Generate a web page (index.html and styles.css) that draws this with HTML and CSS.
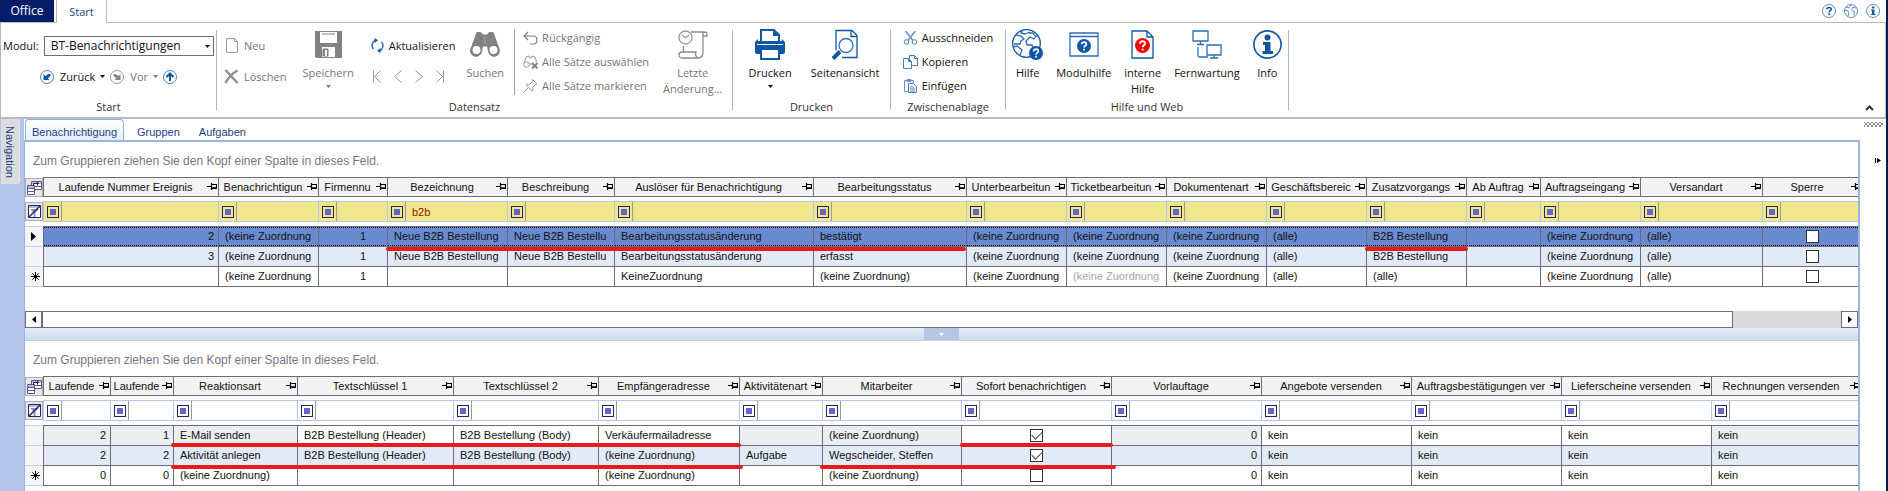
FILE: index.html
```html
<!DOCTYPE html>
<html lang="de">
<head>
  <meta charset="UTF-8">
  <meta name="viewport" content="width=device-width, initial-scale=1.0">
  <title>BT-Benachrichtigungen</title>
  <link rel="stylesheet" href="styles.css">
</head>
<body>
  <!-- shared icons -->
  <svg class="sprite" aria-hidden="true">
    <symbol id="pin" viewBox="0 0 10 7"><path d="M0 3.500h4M4.500 0v7M5 1.500h4.500v4H5M5 4.800h4" fill="none" stroke="#000" stroke-width="1.200"/></symbol>
    <symbol id="caret" viewBox="0 0 5 3"><path d="M0 0h5L2.500 3z" fill="currentColor"/></symbol>
    <symbol id="star" viewBox="0 0 9 9"><path d="M4.500 0v9M0 4.500h9M1.300 1.300l6.400 6.400M7.700 1.300L1.300 7.700" stroke="#000" fill="none"/></symbol>
    <symbol id="chooser" viewBox="0 0 15 15">
      <path d="M4.500 1.500h10v8h-10z" fill="#fff" stroke="#5a5a8c"/>
      <path d="M5 2h9v2H5z" fill="#b9b9e0"/>
      <path d="M.500 5.500h7v9h-7z" fill="#fff" stroke="#5a5a8c"/>
      <path d="M1 6h6v2H1z" fill="#b9b9e0"/>
      <path d="M1 8.500h6M1 11.500h6M8 6.500h6" stroke="#5a5a8c"/>
      <path d="M6.500 6V3.500H12M10.500 1.500v4" fill="none" stroke="#26265a"/>
    </symbol>
    <symbol id="nofilter" viewBox="0 0 13 13">
      <path d="M.500.500h12v12H.500z" fill="#fff" stroke="#26265a"/>
      <path d="M1 1h11v2H1z" fill="#b9b9e0"/>
      <path d="M2 4h9L7.500 7.500V12h-2V7.500z" fill="#8b8bd0"/>
      <path d="M1 12L12 1" stroke="#26265a" stroke-width="1.500"/>
    </symbol>
    <symbol id="question" viewBox="0 0 12 12">
      <circle cx="6" cy="6" r="6" fill="currentColor"/>
      <path d="M4 4.600C4 3.200 4.900 2.600 6 2.600s2 .700 2 1.800c0 1.300-1.900 1.500-1.900 2.900M6.100 8.400v1.500" fill="none" stroke="#fff" stroke-width="1.500"/>
    </symbol>
  </svg>

  <header>
    <div class="tab-bar">
      <button class="tab office">Office</button>
      <button class="tab active">Start</button>
      <div class="quick">
        <button aria-label="Hilfe"><svg width="14" height="14" viewBox="0 0 14 14"><circle cx="7" cy="7" r="6.500" fill="#fff" stroke="#5b8fc7"/><path d="M4.800 5.300C4.800 4 5.800 3.500 7 3.500s2.200.600 2.200 1.800C9.200 6.700 7.100 6.700 7.100 8.400M7.100 9.300v1.700" fill="none" stroke="#0f57a5" stroke-width="1.700"/></svg></button>
        <button aria-label="Web"><svg width="14" height="14" viewBox="0 0 14 14"><circle cx="7" cy="7" r="6.500" fill="#fff" stroke="#5b8fc7"/><path d="M1 6l3 1 1 2-1 3M2 3l3 1 2-3M12 4L9 3 7.500 5.500 9 7.500l1.500 0-.500 4" fill="none" stroke="#5b8fc7"/></svg></button>
        <button aria-label="Info"><svg width="14" height="14" viewBox="0 0 14 14"><circle cx="7" cy="7" r="6.500" fill="#fff" stroke="#5b8fc7"/><path d="M6 2.500h2.500v2H6zM5 5.500h3.500v4.500H9.500v1H4.800v-1H6V6.500H5z" fill="#0f57a5"/></svg></button>
      </div>
    </div>

    <div class="ribbon">
      <section class="group group-start">
        <div class="group-body">
          <div class="pair">
            <div class="row">
              <label for="modul">Modul:</label>
              <div class="select-box">
                <select id="modul"><option>BT-Benachrichtigungen</option></select>
                <svg class="caret"><use href="#caret"/></svg>
              </div>
            </div>
            <div class="row history">
              <button><svg width="14" height="14" viewBox="0 0 14 14"><circle cx="7" cy="7" r="6.500" fill="#fff" stroke="#4a7fbd"/><path d="M3.500 4v6h6L7.800 8.300 10.500 6V4H8.500L5.500 6z" fill="#0f57a5"/></svg>Zurück</button>
              <svg class="caret"><use href="#caret"/></svg>
              <button class="off"><svg width="14" height="14" viewBox="0 0 14 14"><circle cx="7" cy="7" r="6.500" fill="#fff" stroke="#999"/><path d="M10.500 4v6h-6l1.700-1.700L3.500 6V4h2l3 2z" fill="#858585"/></svg>Vor</button>
              <svg class="caret off"><use href="#caret"/></svg>
              <button aria-label="Nach oben"><svg width="14" height="14" viewBox="0 0 14 14"><circle cx="7" cy="7" r="6.500" fill="#fff" stroke="#4a7fbd"/><path d="M7 3v8M3.500 7L7 3.500 10.500 7" fill="none" stroke="#0f57a5" stroke-width="2"/></svg></button>
            </div>
          </div>
        </div>
        <h2>Start</h2>
      </section>
      <div class="sep"></div>

      <section class="group group-data">
        <div class="group-body">
          <div class="pair">
            <button class="row off"><svg width="15" height="15" viewBox="0 0 15 15"><path d="M2.500.500h8l3 3v11h-11zM10.500.500v3h3" fill="#fff" stroke="#999"/></svg>Neu</button>
            <button class="row off"><svg width="15" height="15" viewBox="0 0 15 15"><path d="M1.500 1L13.500 14M13.500 1.500C9 4 4 9 1.500 14" fill="none" stroke="#8c8c8c" stroke-width="2.400"/></svg>Löschen</button>
          </div>
          <button class="big save off">
            <svg class="ico" width="27" height="27" viewBox="0 0 27 27"><path d="M0 0h27v27H1.500L0 25.500z" fill="#828282"/><path d="M5 1h17v11H5zM7 16h13v10H7z" fill="#fff"/><path d="M7 3h13M8 18h5v7H8z" fill="#828282" stroke="#828282"/><path d="M10 19h2v6h-2z" fill="#fff"/></svg>
            <span>Speichern</span>
            <svg class="caret"><use href="#caret"/></svg>
          </button>
          <div class="pair refresh">
            <button class="row"><svg width="13" height="15" viewBox="0 0 13 15"><path d="M4.500 2.200A5.500 5.500 0 0 0 2.500 11M8.500 12.800A5.500 5.500 0 0 0 10.500 4" fill="none" stroke="#2d6db3" stroke-width="1.500"/><path d="M3.500 0v5L7 2.200zM9.500 15v-5L6 12.800z" fill="#0f57a5"/></svg>Aktualisieren</button>
            <div class="row steps off">
              <button aria-label="Erster"><svg width="8" height="13" viewBox="0 0 8 13"><path d="M.500.500v12M7.500.500l-6 6 6 6" fill="none" stroke="#999"/></svg></button>
              <button aria-label="Zurück"><svg width="8" height="13" viewBox="0 0 8 13"><path d="M7.500.500l-7 6 7 6" fill="none" stroke="#999"/></svg></button>
              <button aria-label="Weiter"><svg width="8" height="13" viewBox="0 0 8 13"><path d="M.500.500l7 6-7 6" fill="none" stroke="#999"/></svg></button>
              <button aria-label="Letzter"><svg width="8" height="13" viewBox="0 0 8 13"><path d="M7.500.500v12M.500.500l6 6-6 6" fill="none" stroke="#999"/></svg></button>
            </div>
          </div>
          <button class="big search off">
            <svg class="ico" width="30" height="26" viewBox="0 0 30 26"><path d="M6 2c0-2 6-2 6 0l1 1h4l1-1c0-2 6-2 6 0l5 14a6 6 0 1 1-11 4l-1-5h-4l-1 5A6 6 0 1 1 1 16z" fill="#828282"/><circle cx="6.500" cy="18.500" r="4" fill="#fff"/><circle cx="23.500" cy="18.500" r="4" fill="#fff"/><path d="M15 5v7" stroke="#aaa"/></svg>
            <span>Suchen</span>
          </button>
          <div class="sep inner"></div>
          <div class="list">
            <button class="row off"><svg width="15" height="14" viewBox="0 0 15 14"><path d="M5 1L1 5l4 4M1 5h9.500c4.500 0 4.500 8 0 8H7" fill="none" stroke="#808080" stroke-width="1.200"/></svg>Rückgängig</button>
            <button class="row off"><svg width="15" height="14" viewBox="0 0 15 14"><path d="M1 9l2-7 3-1 1 2h1l1-2 3 1 1.500 5M6 9h3" fill="none" stroke="#999"/><circle cx="3.500" cy="9.500" r="2.800" fill="#fff" stroke="#999"/><path d="M9 8l5.500 5.500M14.500 8L9 13.500" stroke="#858585" stroke-width="2"/></svg>Alle Sätze auswählen</button>
            <button class="row off"><svg width="15" height="14" viewBox="0 0 15 14"><path d="M9.500.500l4.500 4.500-1.500.500-3 3 .500 2.500-1 1-6-6 1-1 2.500.500 3-3zM5.500 8.500L.500 13.500" fill="#fff" stroke="#999"/></svg>Alle Sätze markieren</button>
          </div>
          <button class="big off">
            <svg class="ico" width="30" height="29" viewBox="0 0 30 29"><path d="M13 2h12c4 0 4 0 4 4h-4M25 2v20c0 5-3 6-5 6H4c-4 0-4-6 0-6h14c-1 3 0 5 2 6M5.500 16v6" fill="none" stroke="#8c8c8c" stroke-width="1.300"/><circle cx="7.500" cy="7.500" r="6.500" fill="#fff" stroke="#999" stroke-width="1.300"/><path d="M4 5l3.500 3 3.500-3" fill="none" stroke="#999" stroke-width="1.200"/></svg>
            <span>Letzte<br>Änderung...</span>
          </button>
        </div>
        <h2>Datensatz</h2>
      </section>
      <div class="sep"></div>

      <section class="group group-print">
        <div class="group-body">
          <button class="big">
            <svg class="ico" width="30" height="31" viewBox="0 0 30 31"><path d="M6 12V1h13l5 5v6" fill="#fff" stroke="#0f57a5" stroke-width="2"/><path d="M18 1v6h6" fill="#0f57a5"/><path d="M3 10v2h24v-2l3 3v5H0v-5zM0 17h30v6a2 2 0 0 1-2 2H2a2 2 0 0 1-2-2z" fill="#0f57a5"/><path d="M2 15.500h26" stroke="#fff"/><path d="M6 20h18v10H6z" fill="#fff" stroke="#0f57a5" stroke-width="2"/></svg>
            <span>Drucken</span>
            <svg class="caret"><use href="#caret"/></svg>
          </button>
          <button class="big">
            <svg class="ico" width="26" height="30" viewBox="0 0 26 30"><path d="M4 21V1h16l5 5v22H10" fill="#fff" stroke="#0f57a5" stroke-width="1.300"/><path d="M19 1v6h6" fill="none" stroke="#0f57a5" stroke-width="1.300"/><circle cx="14" cy="16" r="7" fill="#fff" stroke="#2d6db3" stroke-width="1.300"/><path d="M1 29l7-7" stroke="#0f57a5" stroke-width="4"/></svg>
            <span>Seitenansicht</span>
          </button>
        </div>
        <h2>Drucken</h2>
      </section>
      <div class="sep"></div>

      <section class="group group-clip">
        <div class="group-body">
          <div class="list">
            <button class="row"><svg width="15" height="14" viewBox="0 0 15 14"><path d="M2.500 0l7.500 9.500M12.500 0L5 9.500" fill="none" stroke="#6a96c8" stroke-width="1.600"/><circle cx="3.500" cy="11" r="2.300" fill="#fff" stroke="#4a7fbd"/><circle cx="11.500" cy="11" r="2.300" fill="#fff" stroke="#4a7fbd"/></svg>Ausschneiden</button>
            <button class="row"><svg width="15" height="14" viewBox="0 0 15 14"><path d="M6.500.500h5l3 3v7h-8zM11.500.500v3h3" fill="#fff" stroke="#4a7fbd"/><path d="M.500 3.500h5l3 3v7h-8zM5.500 3.500v3h3" fill="#fff" stroke="#4a7fbd"/></svg>Kopieren</button>
            <button class="row"><svg width="15" height="14" viewBox="0 0 15 14"><path d="M1.500 1.500h9v11h-9zM4 .500h4v2H4z" fill="#fff" stroke="#6a96c8"/><path d="M5.500 4.500h5l3 3v6h-8zM7 8h4M7 10h5M7 12h5" fill="#fff" stroke="#4a7fbd"/></svg>Einfügen</button>
          </div>
        </div>
        <h2>Zwischenablage</h2>
      </section>
      <div class="sep"></div>

      <section class="group group-help">
        <div class="group-body">
          <button class="big">
            <svg class="ico" width="31" height="31" viewBox="0 0 31 31"><circle cx="14.500" cy="14.500" r="13.800" fill="#fff" stroke="#0f57a5" stroke-width="1.300"/><path d="M4 6l5 1 3 3-3 2-1 3-6 0M1 18l4-1 5 4-2 5M11 1L9 4l4 1 5-2M27 8l-3-1-2 3-4-2-4 4 1 4 5 0 1 3M17 4l4 0 2 3" fill="none" stroke="#2d6db3" stroke-width="1.300"/><circle cx="24" cy="24" r="7" fill="#0f57a5"/><path d="M21.700 22.500c0-1.600 1-2.400 2.300-2.400s2.300.900 2.300 2.100c0 1.500-2.200 1.700-2.200 3.300M24.100 26.800v1.700" fill="none" stroke="#fff" stroke-width="1.700"/></svg>
            <span>Hilfe</span>
          </button>
          <button class="big">
            <svg class="ico" width="30" height="29" viewBox="0 0 30 29"><path d="M1 3h28v23H1zM1 6.500h28" fill="#fff" stroke="#2d6db3" stroke-width="1.300"/><svg class="blue" x="8" y="9" width="14" height="14"><use href="#question"/></svg></svg>
            <span>Modulhilfe</span>
          </button>
          <button class="big">
            <svg class="ico" width="23" height="29" viewBox="0 0 23 29"><path d="M1 1h15l6 6v21H1zM16 1v6h6" fill="#fff" stroke="#0f57a5" stroke-width="1.300"/><svg class="red" x="4" y="8" width="15" height="15"><use href="#question"/></svg></svg>
            <span>interne<br>Hilfe</span>
          </button>
          <button class="big">
            <svg class="ico" width="30" height="29" viewBox="0 0 30 29"><path d="M1 1h15v10H1zM15 15h14v10H15zM8.500 11v3M5 14.500h7M22 25v3M18 28h8M6 17v8c0 2 1 2 2 2h8" fill="none" stroke="#2d6db3" stroke-width="1.300"/></svg>
            <span>Fernwartung</span>
          </button>
          <button class="big">
            <svg class="ico" width="29" height="29" viewBox="0 0 29 29"><circle cx="14.500" cy="14.500" r="13.600" fill="#fff" stroke="#0f57a5" stroke-width="1.600"/><circle cx="14.500" cy="7.500" r="3" fill="#0f57a5"/><path d="M10 12h7.500v9H20v3H9.500v-3H12v-6h-2z" fill="#0f57a5"/></svg>
            <span>Info</span>
          </button>
        </div>
        <h2>Hilfe und Web</h2>
      </section>
      <div class="sep"></div>
      <button class="collapse" aria-label="Menüband minimieren"><svg width="9" height="6" viewBox="0 0 9 6"><path d="M1 5l3.500-3.500L8 5" fill="none" stroke="#333" stroke-width="2"/></svg></button>
    </div>
  </header>

  <div class="workspace">
    <aside class="nav-strip"><button>Navigation</button></aside>

    <main>
      <nav class="sheets">
        <a href="#" class="active">Benachrichtigung</a>
        <a href="#">Gruppen</a>
        <a href="#">Aufgaben</a>
      </nav>

      <div class="panel">
        <div class="grid grid-top">
          <p class="group-hint">Zum Gruppieren ziehen Sie den Kopf einer Spalte in dieses Feld.</p>
          <div class="sheet">
            <table>
              <colgroup>
                <col class="w18"><col class="w175"><col class="w100"><col class="w69"><col class="w120"><col class="w107"><col class="w199"><col class="w153"><col class="w100"><col class="w100"><col class="w100"><col class="w100"><col class="w100"><col class="w74"><col class="w100"><col class="w122"><col class="w100">
              </colgroup>
              <thead>
                <tr class="head">
                  <td class="corner"><button aria-label="Feldauswahl"><svg width="15" height="15"><use href="#chooser"/></svg></button></td>
                  <th>Laufende Nummer Ereignis<svg class="pin"><use href="#pin"/></svg></th>
                  <th>Benachrichtigun<svg class="pin"><use href="#pin"/></svg></th>
                  <th>Firmennu<svg class="pin"><use href="#pin"/></svg></th>
                  <th>Bezeichnung<svg class="pin"><use href="#pin"/></svg></th>
                  <th>Beschreibung<svg class="pin"><use href="#pin"/></svg></th>
                  <th>Auslöser für Benachrichtigung<svg class="pin"><use href="#pin"/></svg></th>
                  <th>Bearbeitungsstatus<svg class="pin"><use href="#pin"/></svg></th>
                  <th>Unterbearbeitun<svg class="pin"><use href="#pin"/></svg></th>
                  <th>Ticketbearbeitun<svg class="pin"><use href="#pin"/></svg></th>
                  <th>Dokumentenart<svg class="pin"><use href="#pin"/></svg></th>
                  <th>Geschäftsbereic<svg class="pin"><use href="#pin"/></svg></th>
                  <th>Zusatzvorgangs<svg class="pin"><use href="#pin"/></svg></th>
                  <th>Ab Auftrag<svg class="pin"><use href="#pin"/></svg></th>
                  <th>Auftragseingang<svg class="pin"><use href="#pin"/></svg></th>
                  <th>Versandart<svg class="pin"><use href="#pin"/></svg></th>
                  <th>Sperre<svg class="pin"><use href="#pin"/></svg></th>
                </tr>
                <tr class="gap"><td colspan="17"></td></tr>
                <tr class="filter active">
                  <td class="corner"><button aria-label="Filter löschen"><svg width="13" height="13"><use href="#nofilter"/></svg></button></td>
                  <td><div><button aria-label="Operator"></button><input aria-label="Laufende Nummer Ereignis"></div></td>
                  <td><div><button aria-label="Operator"></button><input aria-label="Benachrichtigung"></div></td>
                  <td><div><button aria-label="Operator"></button><input aria-label="Firmennummer"></div></td>
                  <td><div><button aria-label="Operator"></button><input aria-label="Bezeichnung" value="b2b"></div></td>
                  <td><div><button aria-label="Operator"></button><input aria-label="Beschreibung"></div></td>
                  <td><div><button aria-label="Operator"></button><input aria-label="Auslöser"></div></td>
                  <td><div><button aria-label="Operator"></button><input aria-label="Bearbeitungsstatus"></div></td>
                  <td><div><button aria-label="Operator"></button><input aria-label="Unterbearbeitung"></div></td>
                  <td><div><button aria-label="Operator"></button><input aria-label="Ticketbearbeitung"></div></td>
                  <td><div><button aria-label="Operator"></button><input aria-label="Dokumentenart"></div></td>
                  <td><div><button aria-label="Operator"></button><input aria-label="Geschäftsbereich"></div></td>
                  <td><div><button aria-label="Operator"></button><input aria-label="Zusatzvorgang"></div></td>
                  <td><div><button aria-label="Operator"></button><input aria-label="Ab Auftrag"></div></td>
                  <td><div><button aria-label="Operator"></button><input aria-label="Auftragseingang"></div></td>
                  <td><div><button aria-label="Operator"></button><input aria-label="Versandart"></div></td>
                  <td><div><button aria-label="Operator"></button><input aria-label="Sperre"></div></td>
                </tr>
                <tr class="gap"><td colspan="17"></td></tr>
              </thead>
              <tbody>
                <tr class="selected">
                  <td class="marker"><svg width="5" height="9" viewBox="0 0 5 9"><path d="M0 0l5 4.500L0 9z"/></svg></td>
                  <td class="num">2</td><td>(keine Zuordnung</td><td class="num firm">1</td><td>Neue B2B Bestellung</td><td>Neue B2B Bestellu</td><td>Bearbeitungsstatusänderung</td><td>bestätigt</td><td>(keine Zuordnung</td><td>(keine Zuordnung</td><td>(keine Zuordnung</td><td>(alle)</td><td>B2B Bestellung</td><td></td><td>(keine Zuordnung</td><td>(alle)</td><td class="check"><input type="checkbox" aria-label="Sperre"></td>
                </tr>
                <tr class="alt">
                  <td class="marker"></td>
                  <td class="num">3</td><td>(keine Zuordnung</td><td class="num firm">1</td><td>Neue B2B Bestellung</td><td>Neue B2B Bestellu</td><td>Bearbeitungsstatusänderung</td><td>erfasst</td><td>(keine Zuordnung</td><td>(keine Zuordnung</td><td>(keine Zuordnung</td><td>(alle)</td><td>B2B Bestellung</td><td></td><td>(keine Zuordnung</td><td>(alle)</td><td class="check"><input type="checkbox" aria-label="Sperre"></td>
                </tr>
                <tr>
                  <td class="marker"><svg width="9" height="9"><use href="#star"/></svg></td>
                  <td class="num"></td><td>(keine Zuordnung</td><td class="num firm">1</td><td></td><td></td><td>KeineZuordnung</td><td>(keine Zuordnung)</td><td>(keine Zuordnung</td><td class="dim">(keine Zuordnung</td><td>(keine Zuordnung</td><td>(alle)</td><td>(alle)</td><td></td><td>(keine Zuordnung</td><td>(alle)</td><td class="check"><input type="checkbox" aria-label="Sperre"></td>
                </tr>
              </tbody>
            </table>
            <i class="mark mark-name"></i>
            <i class="mark mark-process"></i>
          </div>
          <div class="scrollbar">
            <button aria-label="Nach links"><svg width="4" height="7" viewBox="0 0 4 7"><path d="M4 0v7L0 3.500z"/></svg></button>
            <div class="track"><div class="thumb"></div></div>
            <button aria-label="Nach rechts"><svg width="4" height="7" viewBox="0 0 4 7"><path d="M0 0v7l4-3.500z"/></svg></button>
          </div>
        </div>

        <div class="splitter"><button aria-label="Bereich einklappen"><svg class="caret"><use href="#caret"/></svg></button></div>

        <div class="grid">
          <p class="group-hint">Zum Gruppieren ziehen Sie den Kopf einer Spalte in dieses Feld.</p>
          <div class="sheet">
            <table>
              <colgroup>
                <col class="w18"><col class="w67"><col class="w63"><col class="w124"><col class="w156"><col class="w145"><col class="w141"><col class="w83"><col class="w139"><col class="w150"><col class="w150"><col class="w150"><col class="w150"><col class="w150"><col class="w150">
              </colgroup>
              <thead>
                <tr class="head">
                  <td class="corner"><button aria-label="Feldauswahl"><svg width="15" height="15"><use href="#chooser"/></svg></button></td>
                  <th>Laufende<svg class="pin"><use href="#pin"/></svg></th>
                  <th>Laufende<svg class="pin"><use href="#pin"/></svg></th>
                  <th>Reaktionsart<svg class="pin"><use href="#pin"/></svg></th>
                  <th>Textschlüssel 1<svg class="pin"><use href="#pin"/></svg></th>
                  <th>Textschlüssel 2<svg class="pin"><use href="#pin"/></svg></th>
                  <th>Empfängeradresse<svg class="pin"><use href="#pin"/></svg></th>
                  <th>Aktivitätenart<svg class="pin"><use href="#pin"/></svg></th>
                  <th>Mitarbeiter<svg class="pin"><use href="#pin"/></svg></th>
                  <th>Sofort benachrichtigen<svg class="pin"><use href="#pin"/></svg></th>
                  <th>Vorlauftage<svg class="pin"><use href="#pin"/></svg></th>
                  <th>Angebote versenden<svg class="pin"><use href="#pin"/></svg></th>
                  <th>Auftragsbestätigungen ver<svg class="pin"><use href="#pin"/></svg></th>
                  <th>Lieferscheine versenden<svg class="pin"><use href="#pin"/></svg></th>
                  <th>Rechnungen versenden<svg class="pin"><use href="#pin"/></svg></th>
                </tr>
                <tr class="gap"><td colspan="15"></td></tr>
                <tr class="filter">
                  <td class="corner"><button aria-label="Filter löschen"><svg width="13" height="13"><use href="#nofilter"/></svg></button></td>
                  <td><div><button aria-label="Operator"></button><input aria-label="Laufende Nummer Ereignis"></div></td>
                  <td><div><button aria-label="Operator"></button><input aria-label="Laufende Nummer"></div></td>
                  <td><div><button aria-label="Operator"></button><input aria-label="Reaktionsart"></div></td>
                  <td><div><button aria-label="Operator"></button><input aria-label="Textschlüssel 1"></div></td>
                  <td><div><button aria-label="Operator"></button><input aria-label="Textschlüssel 2"></div></td>
                  <td><div><button aria-label="Operator"></button><input aria-label="Empfängeradresse"></div></td>
                  <td><div><button aria-label="Operator"></button><input aria-label="Aktivitätenart"></div></td>
                  <td><div><button aria-label="Operator"></button><input aria-label="Mitarbeiter"></div></td>
                  <td><div><button aria-label="Operator"></button><input aria-label="Sofort benachrichtigen"></div></td>
                  <td><div><button aria-label="Operator"></button><input aria-label="Vorlauftage"></div></td>
                  <td><div><button aria-label="Operator"></button><input aria-label="Angebote versenden"></div></td>
                  <td><div><button aria-label="Operator"></button><input aria-label="Auftragsbestätigungen versenden"></div></td>
                  <td><div><button aria-label="Operator"></button><input aria-label="Lieferscheine versenden"></div></td>
                  <td><div><button aria-label="Operator"></button><input aria-label="Rechnungen versenden"></div></td>
                </tr>
                <tr class="gap"><td colspan="15"></td></tr>
              </thead>
              <tbody>
                <tr>
                  <td class="marker"></td>
                  <td class="num locked">2</td><td class="num locked">1</td><td class="locked">E-Mail senden</td><td>B2B Bestellung (Header)</td><td>B2B Bestellung (Body)</td><td>Verkäufermailadresse</td><td class="locked"></td><td class="locked">(keine Zuordnung)</td><td class="check"><input type="checkbox" aria-label="Sofort benachrichtigen" checked></td><td class="num locked">0</td><td>kein</td><td>kein</td><td>kein</td><td class="locked">kein</td>
                </tr>
                <tr class="alt">
                  <td class="marker"></td>
                  <td class="num">2</td><td class="num">2</td><td>Aktivität anlegen</td><td>B2B Bestellung (Header)</td><td>B2B Bestellung (Body)</td><td>(keine Zuordnung)</td><td>Aufgabe</td><td>Wegscheider, Steffen</td><td class="check"><input type="checkbox" aria-label="Sofort benachrichtigen" checked></td><td class="num">0</td><td>kein</td><td>kein</td><td>kein</td><td>kein</td>
                </tr>
                <tr>
                  <td class="marker"><svg width="9" height="9"><use href="#star"/></svg></td>
                  <td class="num">0</td><td class="num">0</td><td>(keine Zuordnung)</td><td></td><td></td><td>(keine Zuordnung)</td><td></td><td>(keine Zuordnung)</td><td class="check"><input type="checkbox" aria-label="Sofort benachrichtigen"></td><td class="num">0</td><td>kein</td><td>kein</td><td>kein</td><td>kein</td>
                </tr>
              </tbody>
            </table>
            <i class="mark mark-mail"></i>
            <i class="mark mark-instant"></i>
            <i class="mark mark-task"></i>
            <i class="mark mark-staff"></i>
          </div>
        </div>
      </div>
    </main>

    <aside class="rail">
      <div class="grip"></div>
      <button aria-label="Ausklappen"><svg width="6" height="5" viewBox="0 0 6 5"><path d="M0 0h1v5H0zM2 0l4 2.500L2 5z"/></svg></button>
    </aside>
  </div>
</body>
</html>
```
FILE: styles.css
```css
* {
  box-sizing: border-box;
  margin: 0;
  padding: 0;
}
body {
  display: flex;
  flex-direction: column;
  min-height: 100vh;
  background-color: #fff;
  border-right: 2px solid #0b1c50;
  font-family: "Open Sans", "Noto Sans", sans-serif;
  font-size: 11px;
  line-height: 16px;
  color: #111;
  overflow: hidden;
}
button, select, input {
  font: inherit;
  color: inherit;
  background: none;
  border: none;
}
svg {
  display: block;
  flex: none;
}
.sprite {
  position: absolute;
  width: 0;
  height: 0;
}
.caret {
  width: 5px;
  height: 3px;
}
.off {
  color: #757575;
}

/* tab bar */
.tab-bar {
  display: flex;
  height: 23px;
  border-bottom: 1px solid #b9b9c0;
}
.tab {
  width: 51px;
  color: #1e3f80;
}
.tab.office {
  width: 54px;
  margin-right: 2px;
  background-color: #061c69;
  color: #fff;
  font-size: 12px;
}
.tab.active {
  height: 23px;
  border: solid #b9b9c0;
  border-width: 0 1px;
  background-color: #fff;
}
.quick {
  display: flex;
  align-items: center;
  gap: 8px;
  margin-left: auto;
  padding-right: 6px;
}

/* ribbon */
.ribbon {
  display: flex;
  border: solid #b9b9c0;
  border-width: 0 1px 2px;
  height: 96px;
}
.group {
  display: flex;
  flex-direction: column;
  padding-top: 3px;
}
.group h2 {
  font-size: 11px;
  font-weight: normal;
  text-align: center;
  color: #333;
}
.group-body {
  display: flex;
  justify-content: center;
  height: 73px;
}
.sep {
  width: 1px;
  margin: 7px 0;
  background-color: #a3b8d6;
}
.sep.inner {
  margin: 3px 0 4px;
  background-color: #a0a0a0;
}
.row {
  display: flex;
  align-items: center;
  gap: 5px;
  white-space: nowrap;
}
.pair {
  display: flex;
  flex-direction: column;
  gap: 10px;
  padding-top: 9px;
}
.pair .row {
  height: 21px;
}
.list .row {
  height: 24px;
  gap: 4px;
}
.big {
  display: flex;
  flex-direction: column;
  align-items: center;
  padding-top: 2px;
}
.big .ico {
  height: 33px;
  margin-bottom: 4px;
}
.big .caret {
  margin-top: 4px;
}
.blue {
  color: #0f57a5;
}
.red {
  color: #f00;
}
.group-start {
  width: 215px;
}
.group-start .pair {
  flex: 1;
  padding: 9px 2px 0 2px;
}
.select-box {
  position: relative;
  flex: 1;
}
.select-box select {
  width: 100%;
  height: 20px;
  padding-left: 6px;
  border: 1px solid #6e6c7c;
  font-size: 12px;
  line-height: 16px;
  appearance: none;
}
.select-box .caret {
  position: absolute;
  right: 4px;
  top: 9px;
}
.history {
  justify-content: center;
}
.history button {
  display: flex;
  align-items: center;
  gap: 6px;
}
.group-data {
  width: 515px;
}
.group-data .group-body {
  justify-content: flex-start;
  gap: 8px;
  padding-left: 7px;
}
.save {
  margin: 0 9px 0 8px;
}
.refresh {
  margin-right: 3px;
}
.search {
  margin-right: 2px;
}
.group-data .list {
  margin-right: 6px;
}
.steps {
  gap: 13px;
  padding-left: 2px;
}
.group-print {
  width: 157px;
}
.group-print .group-body {
  gap: 19px;
  padding-left: 5px;
}
.group-clip {
  width: 114px;
}
.group-help {
  width: 282px;
}
.group-help .group-body {
  gap: 13px;
}
.collapse {
  margin: auto 11px 6px auto;
}

/* workspace */
.workspace {
  display: flex;
  flex: 1;
}
.nav-strip {
  width: 24px;
  background-color: #b2c5e8;
}
.nav-strip button {
  writing-mode: vertical-rl;
  width: 19px;
  height: 65px;
  margin-left: 1px;
  border-right: 1px solid #dce8f8;
  border-radius: 0 3px 3px 0;
  background-color: #dcdcde;
  font-family: "Liberation Sans", Arial, sans-serif;
  color: #1a3f85;
}
main {
  flex: 1;
  min-width: 0;
  display: flex;
  flex-direction: column;
  font-family: "Liberation Sans", Arial, sans-serif;
}
.sheets {
  display: flex;
  height: 21px;
  padding-left: 1px;
}
.sheets a {
  padding: 5px 6px 0;
  margin-right: 7px;
  color: #1a3f85;
  text-decoration: none;
}
.sheets a.active {
  padding: 4px 6px 0;
  border: 1px solid #8eb2e4;
  border-bottom: none;
  border-radius: 4px 4px 0 0;
  background: linear-gradient(#fff, #e6eefb);
}
.panel {
  flex: 1;
  border: solid #98b6e2;
  border-width: 2px 2px 0 1px;
}
.rail {
  display: flex;
  flex-direction: column;
  align-items: flex-end;
  width: 26px;
  padding: 3px 3px 0 0;
}
.rail button {
  margin: 31px 2px 0 0;
}
.grip {
  width: 19px;
  height: 5px;
  background:
    radial-gradient(#888 1px, transparent 1px) 0 0 / 4px 4px,
    radial-gradient(#888 1px, transparent 1px) 2px 2px / 4px 4px;
}

/* grids */
.group-hint {
  height: 35px;
  padding: 11px 8px 0;
  font-size: 12px;
  color: #777582;
}
.sheet {
  position: relative;
  overflow: hidden;
}
.grid-top .sheet {
  padding-bottom: 24px;
}
table {
  width: 100%;
  table-layout: fixed;
  border-spacing: 0;
}
th, td {
  height: 20px;
  white-space: nowrap;
  overflow: hidden;
}
th {
  position: relative;
  padding-right: 11px;
  border: solid #6e6c7c;
  border-width: 1px 0 1px 1px;
  background-color: #f3f3f3;
  font-weight: normal;
  text-align: center;
}
.pin {
  position: absolute;
  right: 1px;
  top: 5px;
  width: 10px;
  height: 7px;
}
.gap td {
  height: 4px;
}
.corner button {
  display: flex;
  align-items: center;
  justify-content: center;
  width: 18px;
  height: 19px;
  border: 1px solid #adadb2;
  background-color: #e6e6ea;
}
.filter td {
  height: 21px;
}
.filter td + td {
  border: solid #b4c8ea;
  border-width: 1px 0 1px 1px;
}
.filter.active td + td {
  background-color: #f0e68c;
}
.filter div {
  display: flex;
  align-items: center;
  height: 19px;
  padding-left: 3px;
}
.filter div button {
  flex: none;
  width: 12px;
  height: 12px;
  margin-right: 2px;
  padding: 2px;
  border: 1px solid #26265a;
  background: #6464cc content-box;
}
.filter input {
  width: 100%;
  min-width: 0;
  height: 19px;
  padding-left: 6px;
  border-left: 1px solid #999;
  color: #8b1500;
}
tbody td {
  padding: 0 4px 2px 6px;
  border: solid #6e6c7c;
  border-width: 1px 0 0 1px;
}
tbody tr:last-child td {
  height: 21px;
  border-bottom-width: 1px;
}
tbody .marker {
  padding: 0 0 0 6px;
  border-left: none;
  border-color: #c5d3e6;
  background-color: #f5f5f7;
}
.num {
  text-align: right;
}
tbody .firm {
  padding-right: 21px;
}
.dim {
  color: #a8a8a8;
}
.locked {
  background-color: #ebeef0;
}
.alt td + td {
  background-color: #e2eaf7;
}
.selected td + td {
  background:
    repeating-linear-gradient(90deg, #000 0 1px, transparent 1px 2px) 0 0 / 100% 1px no-repeat,
    repeating-linear-gradient(90deg, #000 0 1px, transparent 1px 2px) 0 100% / 100% 1px no-repeat,
    #688bd0;
}
tbody .check {
  padding: 0;
}
.check input {
  position: relative;
  display: block;
  width: 13px;
  height: 13px;
  margin: 0 auto;
  border: 1px solid #333;
  background-color: #fff;
  appearance: none;
}
.check input:checked::after {
  content: "";
  position: absolute;
  left: 1px;
  top: 1px;
  width: 9px;
  height: 5px;
  border: solid #444;
  border-width: 0 0 1px 1px;
  transform: rotate(-45deg);
}
.w18 { width: 18px; }
.w63 { width: 63px; }
.w67 { width: 67px; }
.w69 { width: 69px; }
.w74 { width: 74px; }
.w83 { width: 83px; }
.w100 { width: 100px; }
.w107 { width: 107px; }
.w120 { width: 120px; }
.w122 { width: 122px; }
.w124 { width: 124px; }
.w139 { width: 139px; }
.w141 { width: 141px; }
.w145 { width: 145px; }
.w150 { width: 150px; }
.w153 { width: 153px; }
.w156 { width: 156px; }
.w175 { width: 175px; }
.w199 { width: 199px; }

/* red marker strokes laid over the rows */
.mark {
  position: absolute;
  height: 4px;
  border-radius: 2px;
  background-color: #e81b1b;
}
.mark-name {
  left: 361px;
  top: 70px;
  width: 580px;
}
.mark-process {
  left: 1340px;
  top: 70px;
  width: 103px;
}
.mark-mail {
  left: 146px;
  top: 67px;
  width: 570px;
}
.mark-instant {
  left: 935px;
  top: 67px;
  width: 153px;
}
.mark-task {
  left: 146px;
  top: 89px;
  width: 572px;
}
.mark-staff {
  left: 795px;
  top: 89px;
  width: 296px;
}

/* scrollbar and splitter */
.scrollbar {
  display: flex;
  height: 17px;
}
.scrollbar button {
  display: flex;
  align-items: center;
  justify-content: center;
  width: 17px;
  border: 1px solid #6e6c7c;
}
.track {
  flex: 1;
  background-color: #dadadd;
}
.thumb {
  width: 94%;
  height: 17px;
  border: 1px solid #6e6c7c;
  background-color: #fff;
}
.splitter {
  display: flex;
  justify-content: center;
  height: 13px;
  border-bottom: 1px solid #c0cfe2;
  background: linear-gradient(#e4edf7, #cbdcee);
}
.splitter button {
  display: flex;
  align-items: center;
  justify-content: center;
  width: 35px;
  background-color: #b3c6e4;
  color: #fff;
}
```
